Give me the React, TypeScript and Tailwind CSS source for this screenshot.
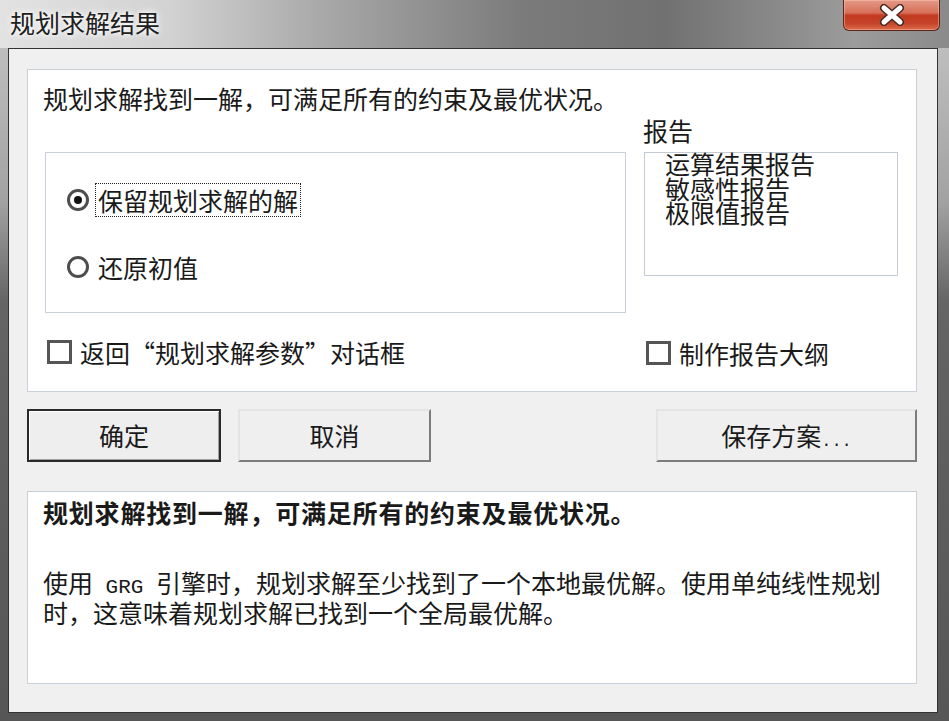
function Radio({ label, checked, focused }: { label: string; checked?: boolean; focused?: boolean }) {
  return (
    <div className="flex items-center h-[34px]">
      <span className="w-[22px] h-[22px] rounded-full border-[3px] border-[#4d4d4d] bg-white flex items-center justify-center">
        {checked && <span className="w-[8px] h-[8px] rounded-full bg-[#111]" />}
      </span>
      <span
        className={
          focused
            ? "ml-[6px] h-[34px] px-[2px] border border-dotted border-[#222] leading-[32px] text-[25px]"
            : "ml-[6px] h-[34px] px-[2px] border border-transparent leading-[32px] text-[25px]"
        }
      >
        {label}
      </span>
    </div>
  );
}

function Check({ label, className }: { label: string; className: string }) {
  return (
    <div className={className}>
      <div className="flex items-center h-[24px]">
        <span className="w-[25px] h-[24px] border-[3px] border-[#555] bg-white" />
        <span className="ml-[8px] text-[25px] leading-[26px] whitespace-nowrap">{label}</span>
      </div>
    </div>
  );
}

export default function App() {
  return (
    <div className="w-[949px] h-[721px] flex flex-col bg-[linear-gradient(180deg,#c6c6c6_0%,#a2a2a2_28%,#646464_42%,#565656_100%)] font-['Noto_Sans_CJK_SC',sans-serif] text-[#1a1a1a]">
      {/* title bar */}
      <div className="h-[48px] flex items-start justify-between bg-[linear-gradient(90deg,#e2e2e2_0%,#d2d2d2_18%,#a6a6a6_35%,#7b7b7b_55%,#717171_70%,#8a8a8a_82%,#9c9c9c_90%,#8a8a8a_100%)]">
        <span className="pl-[10px] pt-[9px] text-[25px] leading-[26px] text-[#202020] [text-shadow:0_0_8px_#ffffff,0_0_4px_#ffffff]">规划求解结果</span>
        <div className="mr-[9px] w-[97px] h-[31px] rounded-b-[6px] border border-t-0 border-[#5e2418] bg-[linear-gradient(180deg,#e39a88_0%,#d7705a_42%,#c23a1f_52%,#c6432a_78%,#dd6c4c_100%)] flex items-center justify-center shadow-[inset_0_0_0_1px_rgba(255,200,180,0.45)]">
          <svg width="30" height="22" viewBox="0 0 30 22">
            <path d="M7 4 L23 18 M23 4 L7 18" stroke="#4a2a24" strokeWidth="8" strokeLinecap="round" />
            <path d="M7 4 L23 18 M23 4 L7 18" stroke="#ffffff" strokeWidth="5" strokeLinecap="round" />
          </svg>
        </div>
      </div>

      {/* client area */}
      <div className="ml-[8px] mr-[11px] h-[665px] border border-[#333] bg-[#f0f0f0] pt-[20px] pl-[18px] pr-[20px]">
        <div className="h-[323px] border border-[#c9d0d9] bg-white pt-[15px] px-[17px]">
          <p className="-ml-[2px] text-[25px] leading-[26px] whitespace-nowrap">规划求解找到一解，可满足所有的约束及最优状况。</p>
          <div className="mt-[6px] flex gap-[18px]">
            <div className="w-[581px]">
              <div className="mt-[35px] h-[161px] border border-[#c9d0d9] pt-[30px] pl-[21px] flex flex-col gap-[33px]">
                <Radio checked focused label="保留规划求解的解" />
                <Radio label="还原初值" />
              </div>
              <Check className="mt-[27px] ml-[2px]" label="返回“规划求解参数”对话框" />
            </div>
            <div className="w-[254px]">
              <p className="-ml-[1px] text-[25px] leading-[26px]">报告</p>
              <div className="mt-[9px] h-[124px] border border-[#c4cbd4] pl-[20px]">
                <div className="-mt-[2px] text-[25px] leading-[24.5px]">
                  <div>运算结果报告</div>
                  <div>敏感性报告</div>
                  <div>极限值报告</div>
                </div>
              </div>
              <Check className="mt-[65px] ml-[2px]" label="制作报告大纲" />
            </div>
          </div>
        </div>

        <div className="mt-[17px] h-[53px] flex">
          <button className="w-[194px] h-[53px] border-2 border-[#2a2a2a] bg-[#eeeeee] text-[25px] shadow-[inset_1px_1px_0_#ffffff,inset_-1px_-1px_0_#a0a0a0]">
            确定
          </button>
          <button className="ml-[17px] w-[193px] h-[53px] border-2 border-t-[#e4e4e4] border-l-[#e4e4e4] border-b-[#7c7c7c] border-r-[#7c7c7c] bg-[#efefef] text-[25px]">
            取消
          </button>
          <button className="ml-auto w-[261px] h-[53px] border-2 border-t-[#e4e4e4] border-l-[#e4e4e4] border-b-[#7c7c7c] border-r-[#7c7c7c] bg-[#efefef] text-[25px]">
            保存方案<span className="font-['Liberation_Mono',monospace] text-[17px]">...</span>
          </button>
        </div>

        <div className="mt-[29px] h-[193px] border border-[#c9d0d9] bg-white pt-[7px] pl-[15px]">
          <p className="text-[25px] leading-[26px] font-bold tracking-[0.8px] whitespace-nowrap">规划求解找到一解，可满足所有的约束及最优状况。</p>
          <p className="mt-[45px] text-[25px] leading-[24px] whitespace-nowrap">
            使用<span className="font-['Liberation_Mono',monospace] text-[21px] whitespace-pre"> GRG </span>引擎时，规划求解至少找到了一个本地最优解。使用单纯线性规划
            <br />
            时，这意味着规划求解已找到一个全局最优解。
          </p>
        </div>
      </div>
    </div>
  );
}
